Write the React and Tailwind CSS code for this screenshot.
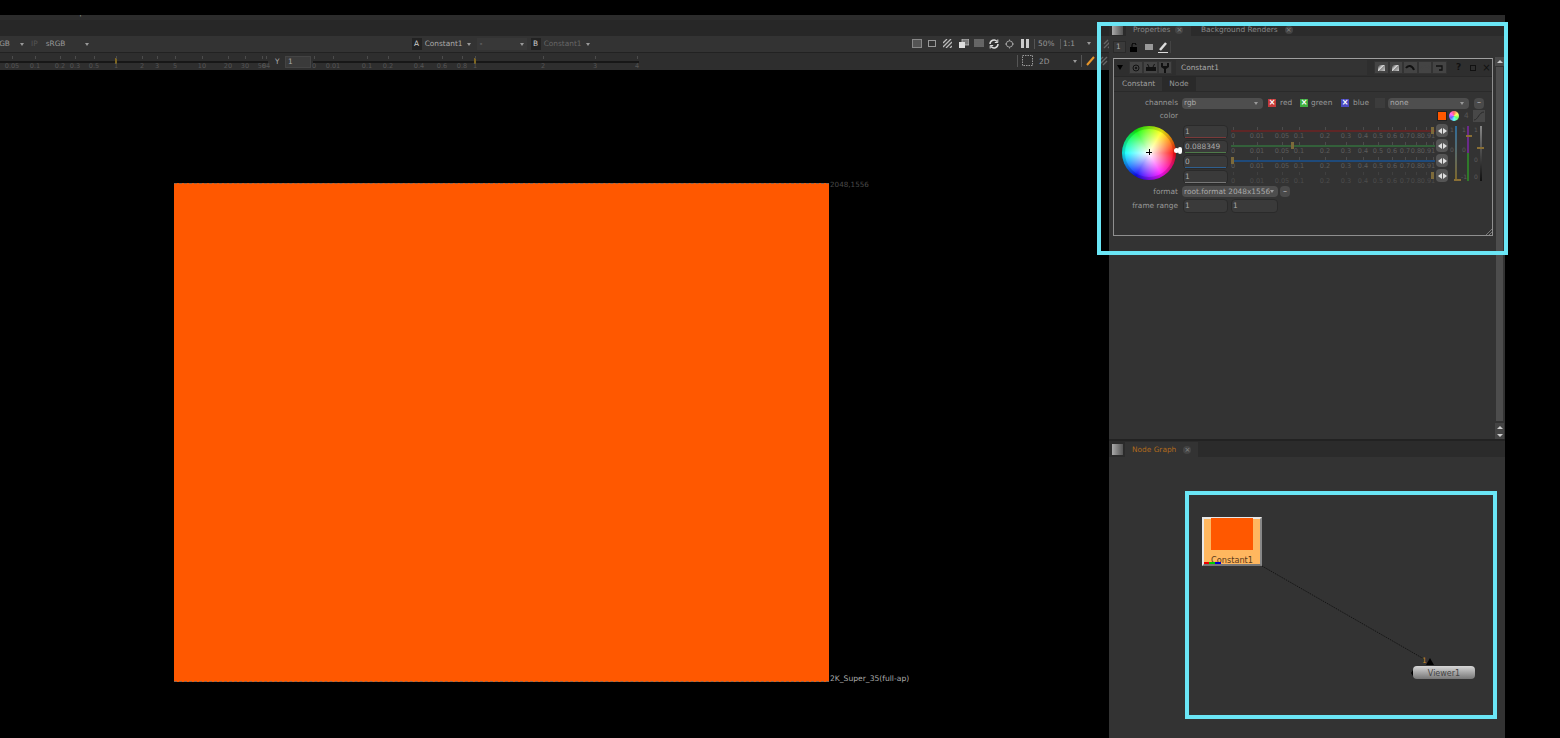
const wheelScale = [
  ["0", 2], ["0.01", 26], ["0.05", 51], ["0.1", 68], ["0.2", 94], ["0.3", 115], ["0.4", 132],
  ["0.5", 147], ["0.6", 161], ["0.7", 174], ["0.8", 185], ["0.9", 195], ["1", 202],
];
const gainScale = [
  ["0.05", 12], ["0.1", 35], ["0.2", 60], ["0.3", 75], ["0.5", 94], ["1", 116], ["2", 142],
  ["3", 157], ["5", 175], ["10", 202], ["20", 228], ["30", 245], ["50", 262], ["64", 266],
];
const gammaScale = [
  ["0", 1], ["0.01", 20], ["0.1", 54], ["0.2", 75], ["0.4", 106], ["0.6", 129], ["0.8", 149],
  ["1", 162], ["2", 230], ["3", 282], ["4", 324],
];

function Hatch() {
  return (
    <svg width="10" height="10" viewBox="0 0 10 10" stroke="#666" strokeWidth="1.4">
      <path d="M1 5 5 1M1 9 9 1M5 9 9 5" />
    </svg>
  );
}

function Arrow({ className = "" }) {
  return <span className={"w-0 h-0 border-x-[2.5px] border-x-transparent border-t-[3px] border-t-[#999] " + className} />;
}

function TabIcon() {
  return <div className="w-[11px] h-[11px] bg-gradient-to-r from-[#aaa] to-[#555]" />;
}

function Close() {
  return <span className="flex items-center justify-center w-[8px] h-[8px] rounded-sm bg-[#444] text-[7px] leading-none text-[#888]">×</span>;
}

function ToolIcons() {
  return (
    <div className="flex items-center">
      <svg className="ml-[912px]" width="10" height="9" viewBox="0 0 10 9"><rect x=".5" y=".5" width="9" height="8" fill="#555" stroke="#888" /></svg>
      <svg className="ml-[6px]" width="8" height="7" viewBox="0 0 8 7"><rect x=".5" y=".5" width="7" height="6" fill="none" stroke="#999" /></svg>
      <svg className="ml-[7px]" width="9" height="9" viewBox="0 0 9 9" stroke="#bbb" strokeWidth="1.3"><path d="M0 4 4 0M0 8 8 0M3 9 9 3M7 9 9 7" /></svg>
      <svg className="ml-[7px]" width="10" height="9" viewBox="0 0 10 9"><rect x="3" y="0" width="7" height="6" fill="#777" stroke="#ccc" strokeWidth=".7" /><rect x="0" y="3" width="6" height="6" fill="#ddd" /></svg>
      <svg className="ml-[5px]" width="10" height="9" viewBox="0 0 10 9" stroke="#999"><path d="M0 1h10M0 3h10M0 5h10M0 7h10" /></svg>
      <svg className="ml-[5px]" width="10" height="10" viewBox="0 0 10 10" fill="none" stroke="#ddd" strokeWidth="1.5"><path d="M1 5a4 4 0 0 1 7-2.6M9 5a4 4 0 0 1-7 2.6" /><path d="M8.8 .5v3h-3M1.2 9.500v-3h3" strokeWidth="1" /></svg>
      <svg className="ml-[6px]" width="9" height="10" viewBox="0 0 10 10" fill="none" stroke="#aaa"><circle cx="5" cy="5" r="3.500" /><path d="M5 0v1.500M5 8.500V10M0 5h1.500M8.500 5H10" /></svg>
      <div className="ml-[7px] flex gap-[2px]">
        <div className="w-[3px] h-[9px] bg-[#ccc]" />
        <div className="w-[3px] h-[9px] bg-[#ccc]" />
      </div>
      <div className="ml-[5px] w-px h-[10px] bg-[#555]" />
      <span className="ml-[3px] w-[22px] text-[#999]">50%</span>
      <div className="w-px h-[10px] bg-[#555]" />
      <span className="ml-[2px] w-[24px] text-[#999]">1:1</span>
      <Arrow />
      <span className="ml-[12px]"><Hatch /></span>
    </div>
  );
}

function ViewerBars() {
  return (
    <div className="text-[7.4px] text-[#999]">
      <div className="h-[5px] overflow-hidden bg-[#2c2c2c] flex text-[#999] text-[7.4px] leading-none">
        <span className="-mt-[6px] -ml-[3px]">Render</span>
        <span className="-mt-[6px] ml-[12px]">Cache</span>
        <span className="-mt-[6px] ml-[9px]">Help</span>
      </div>
      <div className="h-[16px] bg-[#272727]" />
      <div className="h-[16px] bg-[#333] relative flex items-center">
        <span className="w-[20px] -ml-[6px] text-[#999] shrink-0">RGB</span>
        <Arrow className="ml-[6px]" />
        <span className="ml-[7px] text-[#555]">IP</span>
        <span className="ml-[8px] w-[39px]">sRGB</span>
        <Arrow />
        <span className="ml-[323px] w-[10px] h-[12px] flex items-center justify-center bg-[#222] text-[#ccc]">A</span>
        <span className="ml-[3px] w-[42px] h-[12px] leading-[12px] text-[#aaa]">Constant1</span>
        <Arrow />
        <div className="ml-[6px] w-[50px] h-[12px] bg-[#383838] flex items-center justify-between px-[3px]">
          <span>-</span><Arrow />
        </div>
        <span className="ml-[4px] w-[10px] h-[12px] flex items-center justify-center bg-[#222] text-[#ccc]">B</span>
        <span className="ml-[3px] w-[42px] h-[12px] leading-[12px] text-[#666]">Constant1</span>
        <Arrow />
        <div className="absolute inset-0 flex items-center"><ToolIcons /></div>
      </div>
      <div className="h-[18px] bg-[#2e2e2e] border-t border-[#222] relative text-[6.5px] text-[#555]">
        <div className="absolute left-0 w-[268px] top-[8px] h-[2px] bg-[#171717]" />
        <div className="absolute left-[115px] top-[5px] w-[2px] h-[6px] bg-[#7d6520]" />
        {gainScale.map(([t, x]) => (
          <div key={t}>
            <span className="absolute top-[9px] -translate-x-1/2 leading-[8px]" style={{ left: x }}>{t}</span>
            <span className="absolute top-[3px] w-px h-[3px] bg-[#4c4c4c]" style={{ left: x }} />
          </div>
        ))}
        <span className="absolute left-[275px] top-[4px] text-[7.4px] leading-[10px] text-[#aaa]">Y</span>
        <div className="absolute left-[285px] top-[3px] w-[26px] h-[12px] bg-[#3a3a3a] border border-[#444] px-[2px] text-[7.4px] leading-[10px] text-[#aaa]">1</div>
        <div className="absolute left-[313px] w-[326px] top-[8px] h-[2px] bg-[#171717]" />
        <div className="absolute left-[474px] top-[5px] w-[2px] h-[6px] bg-[#7d6520]" />
        {gammaScale.map(([t, x]) => (
          <div key={t}>
            <span className="absolute top-[9px] -translate-x-1/2 leading-[8px]" style={{ left: 313 + x }}>{t}</span>
            <span className="absolute top-[3px] w-px h-[3px] bg-[#4c4c4c]" style={{ left: 313 + x }} />
          </div>
        ))}
        <svg className="absolute left-[1022px] top-[2px]" width="11" height="11" viewBox="0 0 11 11" fill="none" stroke="#999" strokeDasharray="1.500 1"><rect x=".5" y=".5" width="10" height="10" /></svg>
        <div className="absolute left-[1017px] top-[2px] w-px h-[12px] bg-[#555]" />
        <span className="absolute left-[1039px] top-[3px] text-[7.4px] leading-[11px] text-[#999]">2D</span>
        <Arrow className="absolute left-[1073px] top-[7px]" />
        <div className="absolute left-[1081px] top-[2px] w-px h-[12px] bg-[#555]" />
        <svg className="absolute left-[1086px] top-[3px]" width="9" height="10" viewBox="0 0 9 10" stroke="#e8962a" strokeWidth="2"><path d="M1 9 8 1" /></svg>
        <span className="absolute left-[1098px] top-[3px]"><Hatch /></span>
      </div>
    </div>
  );
}

function Viewer() {
  return (
    <div className="flex-1 bg-black pl-[174px] pt-[113px] flex items-start">
      <div className="w-[655px] h-[499px] bg-[#ff5800] border-y border-dashed border-y-[#8a6a55]" />
      <div className="h-[499px] flex flex-col justify-between text-[7.2px] leading-[10px] pl-px">
        <span className="text-[#4a4a4a] -mt-[3px]">2048,1556</span>
        <span className="text-[#aaa] -mb-[2px] text-[7.6px]">2K_Super_35(full-ap)</span>
      </div>
    </div>
  );
}

function Input({ w, line, children }) {
  return (
    <div className={"relative h-[14px] bg-[#3a3a3a] border border-[#2a2a2a] rounded-sm px-px text-[7.4px] leading-[12px] text-[#aaa] " + w}>
      {children}
      {line && <div className={"absolute left-px right-px bottom-0 h-px " + line} />}
    </div>
  );
}

function Select({ w, children }) {
  return (
    <div className={"h-[11px] bg-[#4e4e4e] rounded-sm flex items-center justify-between px-[2px] text-[7.4px] leading-none whitespace-nowrap text-[#aaa] " + w}>
      <span>{children}</span>
      <Arrow className="mr-[3px]" />
    </div>
  );
}

function Check({ bg }) {
  return <span className={"w-[8px] h-[8px] flex items-center justify-center text-[8px] font-bold leading-none text-white " + bg}>×</span>;
}

function Minus() {
  return <div className="w-[10px] h-[11px] bg-[#4a4a4a] rounded-sm flex items-center justify-center text-[8px] leading-none text-[#bbb]">–</div>;
}

function Btn({ w = "w-[14.6px]", children }) {
  return <div className={"h-[13px] flex items-center justify-center bg-[#444] border border-[#333] " + w}>{children}</div>;
}

function SliderRow({ line, thumb, dim }) {
  return (
    <div className="relative h-[14px] w-[204px] text-[6.5px] leading-none">
      {line && <div className={"absolute left-0 right-0 top-[5px] h-[2px] " + line} />}
      {wheelScale.map(([t, x]) => (
        <div key={t}>
          <span className={"absolute top-[2px] w-px h-[3px] " + (dim ? "bg-[#404040]" : "bg-[#4c4c4c]")} style={{ left: x }} />
          <span className={"absolute top-[8px] -translate-x-1/2 " + (dim ? "text-[#4c4c4c]" : "text-[#5c5c5c]")} style={{ left: x }}>{t}</span>
        </div>
      ))}
      {thumb != null && <div className="absolute top-[2px] w-[3px] h-[7px] bg-[#7d6a3a]" style={{ left: thumb }} />}
    </div>
  );
}

function ArrowsBtn() {
  return (
    <div className="w-[12px] h-[13px] rounded-sm bg-[#555] flex items-center justify-center gap-px">
      <span className="w-0 h-0 border-y-[3px] border-y-transparent border-r-[4px] border-r-[#ddd]" />
      <span className="w-0 h-0 border-y-[3px] border-y-transparent border-l-[4px] border-l-[#ddd]" />
    </div>
  );
}

function MiniSliders() {
  return (
    <div className="relative w-[34px] h-[56px] ml-[5px] text-[6px] leading-none text-[#5c5c5c]">
      <div className="absolute left-[2px] top-px w-[2px] h-[55px] bg-gradient-to-b from-[#2a6a9a] to-[#7d6520]" />
      <div className="absolute left-px top-[54px] w-[7px] h-[2px] bg-[#8a6f35]" />
      <span className="absolute -left-[3px] top-[2px]">1</span>
      <span className="absolute -left-[3px] top-[22px]">0</span>
      <div className="absolute left-[14px] top-px w-[2px] h-[27px] bg-[#6a2a8a]" />
      <div className="absolute left-[14px] top-[28px] w-[2px] h-[28px] bg-[#2f7a2a]" />
      <div className="absolute left-[13px] top-[10px] w-[6px] h-[2px] bg-[#8a6f35]" />
      <span className="absolute left-[9px] top-[2px]">1</span>
      <span className="absolute left-[9px] top-[22px]">0</span>
      <span className="absolute left-[8px] top-[49px]">-1</span>
      <div className="absolute left-[27px] top-px w-[2px] h-[55px] bg-gradient-to-b from-[#888] to-[#111]" />
      <div className="absolute left-[24px] top-[22px] w-[7px] h-[2px] bg-[#8a6f35]" />
      <span className="absolute left-[21px] top-[2px]">1</span>
      <span className="absolute left-[21px] top-[32px]">0</span>
      <span className="absolute left-[21px] top-[49px]">0</span>
    </div>
  );
}

function ConstantPanel() {
  return (
    <div className="w-[380px] h-[178px] ml-[4px] border border-[#8f8f8f] border-t-[#a0a0a0] bg-[#333] text-[7.4px] text-[#999] relative">
      <div className="h-[18px] flex items-center bg-[#2e2e2e] border-b border-[#282828]">
        <span className="ml-[3px] w-0 h-0 border-x-[3.5px] border-x-transparent border-t-[5px] border-t-black" />
        <div className="ml-[6px] flex">
          <Btn w="w-[14px]">
            <svg width="8" height="8" viewBox="0 0 8 8" fill="none" stroke="#111"><circle cx="4" cy="4" r="3" /><circle cx="4" cy="4" r=".8" fill="#111" /></svg>
          </Btn>
          <Btn w="w-[15px]">
            <svg width="10" height="8" viewBox="0 0 10 8" fill="#111"><rect x="0" y="3" width="10" height="4" /><path d="M3 3 1.500 0M7 3 8.500 0" stroke="#111" /></svg>
          </Btn>
          <Btn w="w-[14px]">
            <svg width="8" height="10" viewBox="0 0 8 10" fill="#111"><path d="M0 0h2v3h4V0h2v4L5 6v4H3V6L0 4z" /></svg>
          </Btn>
        </div>
        <div className="ml-[4px] w-[191px] h-[15px] bg-[#333] leading-[15px] pl-[5px] text-[#aaa]">Constant1</div>
        <div className="ml-[7px] flex">
          <Btn><span className="w-[7px] h-[6px] bg-[linear-gradient(135deg,#222_0%,#ddd_45%,#888_55%,#ccc_100%)]" /></Btn>
          <Btn><span className="w-[7px] h-[6px] bg-[linear-gradient(135deg,#222_0%,#ddd_45%,#888_55%,#ccc_100%)]" /></Btn>
          <Btn><svg width="10" height="7" viewBox="0 0 10 7" fill="none" stroke="#111" strokeWidth="2"><path d="M1 4C3 1 7 1 9 6" /></svg></Btn>
          <Btn><svg width="10" height="7" viewBox="0 0 10 7" fill="none" stroke="#444" strokeWidth="2"><path d="M9 4C7 1 3 1 1 6" /></svg></Btn>
          <Btn><svg width="9" height="8" viewBox="0 0 9 8" fill="none" stroke="#111" strokeWidth="1.3"><path d="M1 2h6v4H4" /></svg></Btn>
        </div>
        <span className="ml-[9px] text-[#111] font-bold text-[9px] leading-none">?</span>
        <span className="ml-[9px] w-[6px] h-[6px] border border-[#111]" />
        <span className="ml-[6px] text-[#111] text-[10px] leading-none">×</span>
      </div>
      <div className="h-[15px] flex items-end border-b border-[#2a2a2a]">
        <span className="ml-[8px] w-[40px] h-[14px] text-[#a0a0a0] leading-[14px]">Constant</span>
        <span className="w-[34px] h-[14px] text-center leading-[14px] bg-[#2a2a2a] text-[#999]">Node</span>
      </div>
      <div className="h-[5px]" />
      <div className="flex items-center h-[12px]">
        <span className="w-[64px] text-right">channels</span>
        <div className="ml-[4px]"><Select w="w-[81px]">rgb</Select></div>
        <span className="ml-[5px]"><Check bg="bg-[#c43a3a]" /></span>
        <span className="ml-[4px] w-[20px]">red</span>
        <Check bg="bg-[#3fae3f]" />
        <span className="ml-[3px] w-[30px]">green</span>
        <Check bg="bg-[#4a48c0]" />
        <span className="ml-[4px] w-[22px]">blue</span>
        <span className="w-[10px] h-[10px] bg-[#3c3c3c]" />
        <div className="ml-[3px]"><Select w="w-[81px]">none</Select></div>
        <div className="ml-[5px]"><Minus /></div>
      </div>
      <div className="flex items-center h-[12px] mt-px">
        <span className="w-[64px] text-right">color</span>
        <span className="ml-[259px] w-[10px] h-[10px] bg-[#ff5800] border border-[#222]" />
        <span className="ml-[2px] w-[10px] h-[10px] rounded-full bg-[conic-gradient(#f66,#ff6,#6f6,#6ff,#66f,#f6f,#f66)]" />
        <span className="ml-[5px] text-[#555]">4</span>
        <div className="ml-[4px] w-[12px] h-[12px] bg-[#484848]">
          <svg width="12" height="12" viewBox="0 0 12 12" fill="none" stroke="#2a2a2a"><path d="M1 10C5 10 6 2 11 2" /></svg>
        </div>
      </div>
      <div className="flex mt-[3px]">
        <div className="ml-[8px] w-[54px] h-[54px] mt-px rounded-full relative bg-[conic-gradient(from_90deg,#f00,#f0f,#00f,#0ff,#0f0,#ff0,#f00)]">
          <div className="absolute inset-0 rounded-full bg-[radial-gradient(circle,#fff_0%,#fff0_72%)]" />
          <div className="absolute inset-0 rounded-full border-[3px] border-black/15" />
          <span className="absolute left-[24px] top-[26px] w-[6px] h-px bg-black" />
          <span className="absolute left-[27px] top-[23px] w-px h-[6px] bg-black" />
          <span className="absolute -right-[3px] top-[22px] w-[5px] h-[5px] rounded-full bg-white" />
          <span className="absolute -right-[6px] top-[21px] w-[4px] h-[7px] rounded-sm bg-white" />
        </div>
        <div className="ml-[7px] flex flex-col gap-px">
          <Input w="w-[45px]" line="bg-[#7a3a3a]">1</Input>
          <Input w="w-[45px]" line="bg-[#4f7a4a]">0.088349</Input>
          <Input w="w-[45px]" line="bg-[#2f5f8f]">0</Input>
          <Input w="w-[45px]" line="bg-[#777]">1</Input>
        </div>
        <div className="ml-[3px] flex flex-col gap-px">
          <SliderRow line="bg-[#5f2626]" thumb={200} />
          <SliderRow line="bg-[#33603a]" thumb={60} />
          <SliderRow line="bg-[#1f4a7a]" thumb={0} />
          <SliderRow thumb={200} dim />
        </div>
        <div className="ml-px -mt-px flex flex-col gap-[2px]">
          <ArrowsBtn /><ArrowsBtn /><ArrowsBtn /><ArrowsBtn />
        </div>
        <MiniSliders />
      </div>
      <div className="flex items-center h-[11px] mt-[2px]">
        <span className="w-[64px] text-right">format</span>
        <div className="ml-[4px]"><Select w="w-[96px]">root.format 2048x1556</Select></div>
        <div className="ml-[2px]"><Minus /></div>
      </div>
      <div className="flex items-center h-[13px] mt-[2px]">
        <span className="w-[64px] text-right">frame range</span>
        <div className="ml-[5px]"><Input w="w-[45px]">1</Input></div>
        <div className="ml-[3px]"><Input w="w-[47px]">1</Input></div>
      </div>
      <svg className="absolute right-0 bottom-0" width="6" height="6" viewBox="0 0 6 6" stroke="#777"><path d="M0 6 6 0M3 6 6 3" /></svg>
    </div>
  );
}

function Properties() {
  return (
    <div className="h-[417px] flex flex-col bg-[#333] text-[7.4px] text-[#888]">
      <div className="h-[14px] bg-[#2b2b2b] flex items-center">
        <div className="ml-[3px]"><TabIcon /></div>
        <div className="ml-[3px] w-[65px] h-[14px] bg-[#333] flex items-center pl-[7px] pt-[2px]">
          <span>Properties</span>
          <span className="ml-[5px]"><Close /></span>
        </div>
        <span className="ml-[10px] pt-[2px]">Background Renders</span>
        <span className="ml-[7px] pt-[2px]"><Close /></span>
      </div>
      <div className="flex flex-1 min-h-0">
        <div className="w-[386px] flex flex-col">
          <div className="h-[22px] flex items-center ml-[4px]">
            <div className="w-[13px] h-[12px] bg-[#3a3a3a] border border-[#2a2a2a] leading-[10px] pl-[2px] text-[#aaa]">1</div>
            <svg className="ml-[4px]" width="9" height="9" viewBox="0 0 9 9"><rect x="0" y="4" width="7" height="5" fill="#000" /><path d="M2 4V2a2 2 0 0 1 4 0" stroke="#000" fill="none" /></svg>
            <span className="ml-[6px] w-[8px] h-[6px] bg-[#999]" />
            <svg className="ml-[5px]" width="10" height="11" viewBox="0 0 10 11" stroke="#ddd"><path d="M2 8 8 1" strokeWidth="2.5" /><path d="M0 10.500h10" /></svg>
            <div className="ml-[2px] w-px h-[12px] bg-[#444]" />
          </div>
          <ConstantPanel />
        </div>
        <div className="w-[9px] flex flex-col pt-[21px]">
          <div className="h-[9px] bg-[#4a4a4a] flex items-center justify-center">
            <span className="w-0 h-0 border-x-[3px] border-x-transparent border-b-[3px] border-b-[#ccc]" />
          </div>
          <div className="flex-1 bg-[#4d4d4d] mx-px mt-px" />
          <div className="h-[8px] bg-[#444] flex items-center justify-center mt-[2px]">
            <span className="w-0 h-0 border-x-[3px] border-x-transparent border-b-[3px] border-b-[#ccc]" />
          </div>
          <div className="h-[8px] bg-[#444] flex items-center justify-center">
            <span className="w-0 h-0 border-x-[3px] border-x-transparent border-t-[3px] border-t-[#ccc]" />
          </div>
        </div>
      </div>
    </div>
  );
}

function NodeGraph() {
  return (
    <div className="flex-1 flex flex-col bg-[#333] relative border-t-2 border-[#222]">
      <div className="h-[16px] bg-[#2b2b2b] flex items-center">
        <div className="ml-[3px]"><TabIcon /></div>
        <div className="ml-[2px] w-[73px] h-[15px] bg-[#333] flex items-center pl-[7px] pt-[2px] text-[7.4px] text-[#b06a1c]">
          <span>Node Graph</span>
          <span className="ml-[7px]"><Close /></span>
        </div>
      </div>
      <svg className="absolute left-[150px] top-[120px]" width="180" height="110" viewBox="0 0 180 110" fill="none">
        <path d="M3 5 165 98" stroke="#151515" strokeDasharray="1.500 1" />
      </svg>
      <div className="absolute left-[93px] top-[76px] w-[60px] h-[49px] bg-[#ffb75f] border-2 border-[#e8e8e8] border-b-[#777] border-r-[#888]">
        <div className="mx-[7px] h-[32px] -mt-px bg-[#ff5800]" />
        <div className="text-center text-[8.2px] leading-[10px] mt-[5px] text-[#5a3a1a]">Constant1</div>
        <div className="absolute left-0 bottom-0 flex h-[2px]">
          <div className="w-[5px] bg-[#e00]" /><div className="w-[6px] bg-[#0c0]" /><div className="w-[6px] bg-[#00c]" />
        </div>
      </div>
      <span className="absolute left-[313px] top-[216px] text-[7.4px] leading-none text-[#c98a2a]">1</span>
      <span className="absolute left-[317px] top-[217px] w-0 h-0 border-x-[4px] border-x-transparent border-b-[7px] border-b-black" />
      <span className="absolute left-[302px] top-[229px] w-0 h-0 border-y-[3px] border-y-transparent border-r-[2px] border-r-black" />
      <div className="absolute left-[304px] top-[225px] w-[62px] h-[13px] rounded-[4px] bg-gradient-to-b from-[#d8d8d8] to-[#777] text-center text-[8px] leading-[16px] text-[#444]">Viewer1</div>
      <div className="absolute left-[76px] top-[50px] w-[312px] h-[228px] border-[4px] border-[#6ae6f6]" />
    </div>
  );
}

export default function App() {
  return (
    <div className="relative w-[1560px] h-[738px] overflow-hidden bg-black font-['DejaVu_Sans',sans-serif] pt-[15px] flex">
      <div className="w-[1109px] flex flex-col overflow-hidden">
        <ViewerBars />
        <Viewer />
      </div>
      <div className="w-[396px] flex flex-col">
        <div className="h-[7px] bg-[#2c2c2c]" />
        <Properties />
        <NodeGraph />
      </div>
      <div className="absolute left-[1097px] top-[22px] w-[411px] h-[233px] border-[4px] border-[#6ae6f6]" />
    </div>
  );
}
